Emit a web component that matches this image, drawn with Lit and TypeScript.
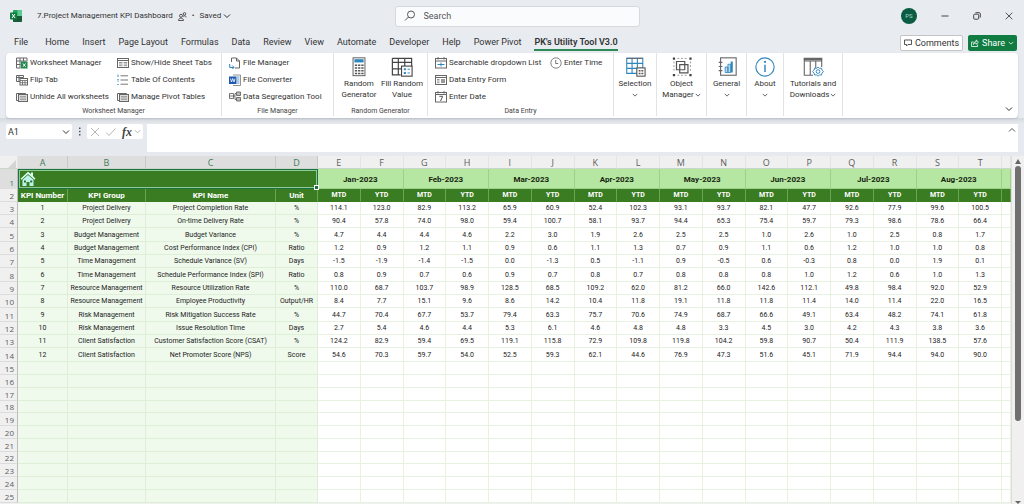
import { LitElement, html, svg, css, nothing } from "lit";
import { customElement } from "lit/decorators.js";
import { classMap } from "lit/directives/class-map.js";

const TABS = ["File", "Home", "Insert", "Page Layout", "Formulas", "Data", "Review", "View", "Automate", "Developer", "Help", "Power Pivot", "PK's Utility Tool V3.0"];
const MONTHS = ["Jan", "Feb", "Mar", "Apr", "May", "Jun", "Jul", "Aug"];
const LETTERS = "ABCDEFGHIJKLMNOPQRST".split("");
const EMPTY_ROWS = Array.from({ length: 11 }, (_, i) => 15 + i);

const KPIS: [string, string, string, string][] = [
  ["Project Delivery", "Project Completion Rate", "%", "114.1 123.0 82.9 113.2 65.9 60.9 52.4 102.3 93.1 93.7 82.1 47.7 92.6 77.9 99.6 100.5"],
  ["Project Delivery", "On-time Delivery Rate", "%", "90.4 57.8 74.0 98.0 59.4 100.7 58.1 93.7 94.4 65.3 75.4 59.7 79.3 98.6 78.6 66.4"],
  ["Budget Management", "Budget Variance", "%", "4.7 4.4 4.4 4.6 2.2 3.0 1.9 2.6 2.5 2.5 1.0 2.6 1.0 2.5 0.8 1.7"],
  ["Budget Management", "Cost Performance Index (CPI)", "Ratio", "1.2 0.9 1.2 1.1 0.9 0.6 1.1 1.3 0.7 0.9 1.1 0.6 1.2 1.0 1.0 0.8"],
  ["Time Management", "Schedule Variance (SV)", "Days", "-1.5 -1.9 -1.4 -1.5 0.0 -1.3 0.5 -1.1 0.9 -0.5 0.6 -0.3 0.8 0.0 1.9 0.1"],
  ["Time Management", "Schedule Performance Index (SPI)", "Ratio", "0.8 0.9 0.7 0.6 0.9 0.7 0.8 0.7 0.8 0.8 0.8 1.0 1.2 0.6 1.0 1.3"],
  ["Resource Management", "Resource Utilization Rate", "%", "110.0 68.7 103.7 98.9 128.5 68.5 109.2 62.0 81.2 66.0 142.6 112.1 49.8 98.4 92.0 52.9"],
  ["Resource Management", "Employee Productivity", "Output/HR", "8.4 7.7 15.1 9.6 8.6 14.2 10.4 11.8 19.1 11.8 11.8 11.4 14.0 11.4 22.0 16.5"],
  ["Risk Management", "Risk Mitigation Success Rate", "%", "44.7 70.4 67.7 53.7 79.4 63.3 75.7 70.6 74.9 68.7 66.6 49.1 63.4 48.2 74.1 61.8"],
  ["Risk Management", "Issue Resolution Time", "Days", "2.7 5.4 4.6 4.4 5.3 6.1 4.6 4.8 4.8 3.3 4.5 3.0 4.2 4.3 3.8 3.6"],
  ["Client Satisfaction", "Customer Satisfaction Score (CSAT)", "%", "124.2 82.9 59.4 69.5 119.1 115.8 72.9 109.8 119.8 104.2 59.8 90.7 50.4 111.9 138.5 57.6"],
  ["Client Satisfaction", "Net Promoter Score (NPS)", "Score", "54.6 70.3 59.7 54.0 52.5 59.3 62.1 44.6 76.9 47.3 51.6 45.1 71.9 94.4 94.0 90.0"],
];

const G = "#666";
const B = "#2f86bd";

/* Small icons use a 12 x 12 box, large ones 24 x 24. */
const SMALL: Record<string, unknown> = {
  sheet: svg`<path d="M.5 1h10.500v3M.5 1v10h4M.5 4h10M4 1v10M7.500 1v3M.5 7.500h4" fill="none" stroke=${G}/><rect x="5" y="4.500" width="6.500" height="7" fill="#1e8a4c"/><path d="m7 6.500 2.500 3.200m0-3.200L7 9.700" stroke="#fff" fill="none"/>`,
  flip: svg`<path d="M6 7.500H.5v-6h7v2M.5 3.500h7M3 1.500v6" fill="none" stroke=${G}/><rect x="4" y="4.500" width="7.500" height="6.500" fill="#fff" stroke=${G}/><path d="M4 6.500h7.500M4 8.700h7.500M6.500 6.500V11M9 6.500V11" stroke=${G} fill="none" stroke-width=".8"/>`,
  stack: svg`<path d="M2 9.500H.5v-7h9V3" fill="none" stroke=${G}/><rect x="2.500" y="3.500" width="9" height="7" fill="#ddd" stroke=${G}/><path d="M4 5.500h6M4 7h6M4 8.500h6" stroke="#888" stroke-width=".7"/>`,
  tabs: svg`<rect x=".5" y="1.500" width="11" height="9" fill="#fff" stroke=${G}/><path d="M.5 3.500h11" stroke=${G}/><path d="M2 5.500h3.500M2 7h3.500M2 8.700h3.500M6.700 5.500h3.500M6.700 7h3.500M6.700 8.700h3.500" stroke="#777" stroke-width=".8"/>`,
  contents: svg`<path d="M1 .5v2.500M.3 5.500h1.400M.3 7h1.400M.3 10.500h1.400" stroke=${B} fill="none" stroke-width=".9"/><path d="M3.500 1.800h7.500M3.500 6h7.500M3.500 10.200h7.500" stroke="#777"/>`,
  file: svg`<path d="M2.500 5V1h5l3 3v7H6M7.500 1v3h3" fill="none" stroke=${G}/><path d="M.7 7v3.500h4M3.200 8.500l2 2-2 1.500" fill="none" stroke=${B}/>`,
  word: svg`<path d="M4 1h7.500v10.500H4" fill="#fff" stroke="#777" stroke-width=".8"/><path d="M8 3h2.500M8 5h2.500M8 7h2.500M8 9h2.500" stroke=${B} stroke-width=".8"/><rect y="2.500" width="7.500" height="7.500" fill="#2159b0"/><path d="m1.500 4.500 1 3.500 1.200-3.500L5 8l1-3.500" stroke="#fff" fill="none" stroke-width=".8"/>`,
  segregate: svg`<path d="M.5 2.500h4v5h-4zM.5 5h4M4.500 5h1.500M6 2.500v6M6 2.500h1.500M6 8.500h1.500" fill="none" stroke=${G} stroke-width=".9"/><path d="M7.500 1h4v3.500h-4zM7.500 6.500h4V10h-4z" fill="#bbb" stroke=${G} stroke-width=".9"/>`,
  dropdown: svg`<rect x=".5" y="1.500" width="11" height="9.500" fill="#fff" stroke=${G}/><path d="M.5 4h11M3 0v2.500M9 0v2.500" stroke=${G}/><path d="M2.500 7.500h7M6 5.500v4" stroke=${B}/>`,
  form: svg`<rect x=".5" y="1.500" width="11" height="9" fill="#fff" stroke=${G}/><path d="M.5 3.500h11" stroke=${G}/><path d="M2 5.500h2.500M2 7h2.500M2 8.700h2.500" stroke="#777" stroke-width=".8"/><rect x="6" y="5" width="4" height="4" fill="#999"/>`,
  date: svg`<rect x=".5" y="1.500" width="11" height="9.500" fill="#fff" stroke=${G}/><path d="M.5 3.500h11M3 0v2.500M9 0v2.500" stroke=${G}/><path d="M4.300 5.300h3.400L5.500 10" stroke="#555" fill="none"/>`,
  clock: svg`<circle cx="6" cy="6" r="5.200" fill="#fff" stroke=${G} stroke-width=".8"/><path d="M5.700 3v3.500h2.500" stroke=${G} fill="none" stroke-width=".9"/>`,
};

const LARGE: Record<string, unknown> = {
  calculator: svg`<rect x="5.500" y="2" width="13" height="19.500" fill="#fff" stroke="#555"/><rect x="7" y="3.500" width="10" height="3.500" fill=${B}/><path d="M7.500 10H10M11 10h2.500M14.500 10H17M7.500 13H10M11 13h2.500M14.500 13H17M7.500 16H10M11 16h2.500M14.500 16H17M7.500 19H10M11 19h2.500M14.500 19H17" stroke="#555" stroke-width="1.600"/>`,
  fill: svg`<path d="M1.500 2.500h21v9M1.500 2.500v18h9M1.500 7h21M8 2.500v18M15 2.500V11M1.500 14h10" fill="none" stroke="#444" stroke-width="1.300"/><rect x="11.500" y="11" width="11.500" height="11" fill="#fff" stroke="#444" stroke-width="1.200"/><path d="M14 14.500h2.200M14 18.500h2.200" stroke=${B} stroke-width="2.200"/><path d="M18 14.500h2.700M18 18.500h2.700" stroke=${B}/>`,
  selection: svg`<path d="M3 2.500h17.500V19H3zM3 8h17.500M3 13.500h17.500M8.800 2.500V19M14.600 2.500V19" fill="none" stroke=${B} stroke-width="1.200"/><path d="M3 2.500h17.500" stroke="#666" stroke-width="1.200"/><rect x="14" y="13" width="9" height="9" fill="#fff" stroke="#555" stroke-width="1.200"/><path d="M16 16h2M19 16h2M16 19h2M19 19h2" stroke="#555" stroke-width="1.600"/>`,
  object: svg`<path d="M6 6h9v9H6zM9.500 9.500h9v9h-9z" fill="none" stroke="#555" stroke-width="1.300"/><path d="M7 2.700h10M3.200 6v12M21.300 6v12M7 21h10" stroke="#888" stroke-dasharray="2 2" stroke-width=".9" fill="none"/><path d="M2 1.500h2.500V4H2zM20 1.500h2.500V4H20zM2 19.700h2.500v2.500H2zM20 19.700h2.500v2.500H20z" fill="#444"/>`,
  general: svg`<rect x="5" y="2" width="17" height="19" fill="#fff" stroke="#666" stroke-width="1.200"/><path d="M3 7h4M3 11.500h4M3 16h4" stroke="#666" stroke-width="1.200"/><path d="M10 18v-6h3v6zM13 18V9h3v9z" fill="#bcd9ec" stroke=${B} stroke-width=".9"/><path d="M16 6h2.300v12H16z" fill=${B}/>`,
  about: svg`<circle cx="12" cy="12" r="10" fill="#fff" stroke=${B} stroke-width="1.200"/><path d="M12 9.500v8" stroke=${B} stroke-width="1.600"/><circle cx="12" cy="6.500" r="1.200" fill=${B}/>`,
  tutorials: svg`<path d="M12 21H2.500V2.500h19V12M2.500 5.500h19M9 5.500V21M15 5.500V13" fill="none" stroke="#666" stroke-width="1.200"/><path d="M2 3.500h20" stroke="#666" stroke-width="2.500"/><path d="m17.500 12 1.500 1.500 2.300-.3.500 2.200 1.700 1.600-1.700 1.600-.5 2.200-2.300-.3-1.500 1.500-1.500-1.500-2.300.3-.5-2.200-1.700-1.600 1.700-1.600.5-2.200 2.300.3z" fill="#fff" stroke=${B}/><circle cx="17.500" cy="17" r="2" fill="none" stroke=${B}/>`,
};

const chevron = (up = false) => html`<svg class="chev" viewBox="0 0 8 8" aria-hidden="true"><path d=${up ? "m1 5.500 3-3 3 3" : "m1 2.500 3 3 3-3"} fill="none" stroke="currentColor" /></svg>`;

@customElement("kpi-ribbon")
class KpiRibbon extends LitElement {
  static styles = css`
    :host {
      display: flex;
      position: relative;
      height: 65px;
      background: #fff;
      border-radius: 4px;
      box-shadow: 0 1px 2px #b9bfc8;
      font: 8px/12px Roboto, sans-serif;
      color: #333;
    }
    .group {
      box-sizing: border-box;
      display: flex;
      flex-direction: column;
      justify-content: space-between;
      padding-top: 4px;
      margin: 0 0 2px;
      border-right: 1px solid #e3e3e3;
    }
    .worksheet { width: 216px; }
    .files { width: 112px; }
    .random { width: 94px; }
    .entry { width: 186px; }
    .selection { width: 43px; }
    .objects { width: 50px; }
    .general { width: 40px; }
    .about { width: 37px; }
    .tutorials { width: 59px; }
    .items { display: flex; padding-left: 10px; }
    .files .items, .entry .items { padding-left: 7px; }
    .random .items, .menu .items { padding: 0; justify-content: center; }
    .stack { display: flex; flex-direction: column; align-items: flex-start; gap: 5px; }
    .worksheet .stack:first-child { width: 101px; }
    .entry .stack:first-child { width: 115px; }
    .label {
      font-size: 7px;
      line-height: 9px;
      text-align: center;
      color: #444;
    }
    button {
      display: flex;
      align-items: center;
      gap: 2px;
      padding: 0;
      border: 0;
      background: none;
      font: inherit;
      color: inherit;
      white-space: nowrap;
    }
    button.large {
      flex-direction: column;
      gap: 0;
      line-height: 11px;
      width: 43px;
      margin-top: -1px;
    }
    .small-icon { width: 12px; height: 12px; flex: none; }
    .large-icon { width: 22px; height: 22px; flex: none; }
    .line { display: flex; align-items: center; gap: 1px; height: 11px; }
    .chev { width: 6px; height: 6px; }
    .collapse {
      position: absolute;
      right: 5px;
      bottom: 5px;
    }
    .collapse .chev { width: 8px; height: 8px; }
  `;

  private small(icon: string, text: string) {
    return html`<button type="button"><svg class="small-icon" viewBox="0 0 12 12" aria-hidden="true">${SMALL[icon]}</svg><span>${text}</span></button>`;
  }

  private large(icon: string, first: string, second = "", menu = false) {
    return html`<button type="button" class="large">
      <svg class="large-icon" viewBox="0 0 24 24" aria-hidden="true">${LARGE[icon]}</svg>
      <span class="line">${first}</span>
      <span class="line">${second}${menu ? chevron() : nothing}</span>
    </button>`;
  }

  render() {
    return html`
      <div class="group worksheet">
        <div class="items">
          <div class="stack">${this.small("sheet", "Worksheet Manager")}${this.small("flip", "Flip Tab")}${this.small("stack", "Unhide All worksheets")}</div>
          <div class="stack">${this.small("tabs", "Show/Hide Sheet Tabs")}${this.small("contents", "Table Of Contents")}${this.small("stack", "Manage Pivot Tables")}</div>
        </div>
        <div class="label">Worksheet Manager</div>
      </div>
      <div class="group files">
        <div class="items">
          <div class="stack">${this.small("file", "File Manager")}${this.small("word", "File Converter")}${this.small("segregate", "Data Segregation Tool")}</div>
        </div>
        <div class="label">File Manager</div>
      </div>
      <div class="group random">
        <div class="items">${this.large("calculator", "Random", "Generator")}${this.large("fill", "Fill Random", "Value")}</div>
        <div class="label">Random Generator</div>
      </div>
      <div class="group entry">
        <div class="items">
          <div class="stack">${this.small("dropdown", "Searchable dropdown List")}${this.small("form", "Data Entry Form")}${this.small("date", "Enter Date")}</div>
          <div class="stack">${this.small("clock", "Enter Time")}</div>
        </div>
        <div class="label">Data Entry</div>
      </div>
      <div class="group menu selection"><div class="items">${this.large("selection", "Selection", "", true)}</div></div>
      <div class="group menu objects"><div class="items">${this.large("object", "Object", "Manager", true)}</div></div>
      <div class="group menu general"><div class="items">${this.large("general", "General", "", true)}</div></div>
      <div class="group menu about"><div class="items">${this.large("about", "About", "", true)}</div></div>
      <div class="group menu tutorials"><div class="items">${this.large("tutorials", "Tutorials and", "Downloads", true)}</div></div>
      <button type="button" class="collapse" aria-label="Collapse ribbon">${chevron()}</button>
    `;
  }
}

@customElement("kpi-sheet")
class KpiSheet extends LitElement {
  static styles = css`
    :host {
      display: flex;
      min-height: 0;
      overflow: hidden;
      background: #f0f0f0;
    }
    table {
      width: 100%;
      table-layout: fixed;
      border-spacing: 0;
      background: #fff;
      font: 7px/12px Roboto, sans-serif;
      color: #222;
    }
    .viewport { flex: 1; min-width: 0; overflow: hidden; }
    .c-row { width: 18px; }
    .c-a { width: 50px; }
    .c-b { width: 78px; }
    .c-c { width: 130px; }
    .c-d { width: 42px; }
    .c-last { width: 9px; }
    th, td {
      box-sizing: border-box;
      height: 13px;
      padding: 1px 0 0;
      line-height: 11px;
      text-align: center;
      vertical-align: middle;
      font-weight: 400;
      white-space: nowrap;
      overflow: hidden;
      border-right: 1px solid #e7f2e0;
      border-bottom: 1px solid #e7f2e0;
    }
    thead th, .num {
      font: 8px/11px "Open Sans", sans-serif;
      color: #5c5c5c;
      background: #f0f0f0;
      border-color: #dcdcdc;
    }
    thead th { font-size: 9px; border-bottom-color: #c9d6c9; border-right-color: #e4e4e4; }
    thead th.sel { background: #dedede; color: #3d7d5c; border-right-color: #c8c8c8; }
    thead .corner { text-align: right; vertical-align: bottom; }
    .corner svg { display: block; width: 8px; height: 8px; margin-left: 8px; }
    .num { text-align: right; padding-right: 3px; border-right-color: #bcbcbc; }
    .key { background: #effaed; border-color: #deefd8; }
    .data:nth-child(3n + 2) > * { height: 14px; }
    .blank > * { line-height: 10px; }
    .blank:nth-last-child(4n) > * { height: 12px; }
    .title > * { height: 20px; }
    .title .num { background: #dedede; color: #3d7d5c; vertical-align: bottom; }
    .title .banner {
      position: relative;
      padding: 0;
      background: #3a7c22;
      border: 1px solid #1e7145;
      box-shadow: inset 0 0 0 1px #8fc995;
      text-align: left;
      overflow: visible;
    }
    .handle {
      position: absolute;
      right: -2px;
      bottom: -2px;
      width: 3px;
      height: 3px;
      background: #1e7145;
      border: 1px solid #fff;
    }
    .home { display: block; padding: 0 0 0 1px; border: 0; background: none; }
    .home svg { display: block; width: 16px; height: 16px; }
    .month {
      background: #b5e6a2;
      font-size: 8px;
      font-weight: 700;
      color: #16250f;
      border-color: #9fd08b;
    }
    .names th:not(.num) {
      background: #3a7c22;
      color: #fff;
      font-size: 8px;
      font-weight: 700;
      border-right-color: #69a552;
      border-bottom-color: #3a7c22;
    }
    .names th.half { font-size: 7px; }
    .bar {
      width: 13px;
      flex: none;
      display: flex;
      flex-direction: column;
      align-items: center;
      padding-top: 3px;
      gap: 2px;
      box-sizing: border-box;
      border-left: 1px solid #ddd;
    }
    .bar svg { width: 6px; height: 5px; flex: none; }
    .thumb { flex: 256; width: 6px; border-radius: 3px; background: #707070; }
    .rest { flex: 74; }
  `;

  render() {
    return html`
      <div class="viewport">
        <table>
          <colgroup>
            <col class="c-row" /><col class="c-a" /><col class="c-b" /><col class="c-c" /><col class="c-d" />
            ${MONTHS.map(() => html`<col /><col />`)}
            <col class="c-last" />
          </colgroup>
          <thead>
            <tr>
              <th class="corner"><svg viewBox="0 0 8 8" aria-hidden="true"><path d="M8 0v8H0z" fill="#d4d4d4" /></svg></th>
              ${LETTERS.map((l, i) => html`<th scope="col" class=${classMap({ sel: i < 4 })}>${l}</th>`)}
              <th></th>
            </tr>
          </thead>
          <tbody>
            <tr class="title">
              <th class="num" scope="row">1</th>
              <td class="banner" colspan="4">
                <button type="button" class="home" aria-label="Home">
                  <svg viewBox="0 0 16 16"><path d="M11 3V1.500h2V5l2.500 2.700-1 1L8 3 1.500 8.700l-1-1L8 .8z" fill="#d9fbf3" /><path d="M2.500 8.800 8 4l5.500 4.800V15H9.500v-4h-3v4h-4z" fill="#b9f3ea" /><path d="M4 9.500h2v2H4zM10.200 9.500h2v2h-2z" fill="#2d6b34" /></svg>
                </button>
                <span class="handle"></span>
              </td>
              ${MONTHS.map((m) => html`<th class="month" colspan="2" scope="colgroup">${m}-2023</th>`)}
              <th class="month"></th>
            </tr>
            <tr class="names">
              <th class="num" scope="row">2</th>
              <th>KPI Number</th><th>KPI Group</th><th>KPI Name</th><th>Unit</th>
              ${MONTHS.map(() => html`<th class="half">MTD</th><th class="half">YTD</th>`)}
              <th></th>
            </tr>
            ${KPIS.map(([group, name, unit, values], i) => html`<tr class="data">
              <th class="num" scope="row">${i + 3}</th>
              <td class="key">${i + 1}</td><td class="key">${group}</td><td class="key">${name}</td><td class="key">${unit}</td>
              ${values.split(" ").map((v) => html`<td>${v}</td>`)}
              <td></td>
            </tr>`)}
            ${EMPTY_ROWS.map((n) => html`<tr class="blank">
              <th class="num" scope="row">${n}</th>
              <td class="key"></td><td class="key"></td><td class="key"></td><td class="key"></td>
              ${MONTHS.map(() => html`<td></td><td></td>`)}
              <td></td>
            </tr>`)}
          </tbody>
        </table>
      </div>
      <div class="bar">
        <svg viewBox="0 0 6 5" aria-hidden="true"><path d="m3 0 3 5H0z" fill="#666" /></svg>
        <div class="thumb"></div>
        <div class="rest"></div>
        <svg viewBox="0 0 6 5" aria-hidden="true"><path d="M0 2h6L3 5z" fill="#666" /></svg>
      </div>
    `;
  }
}

@customElement("app-root")
class AppRoot extends LitElement {
  static styles = css`
    :host {
      display: flex;
      flex-direction: column;
      height: 100vh;
      overflow: hidden;
      background: #e8ebf0;
      font: 8px/12px Roboto, sans-serif;
      color: #333;
    }
    button, input { font: inherit; color: inherit; }
    button { display: flex; align-items: center; padding: 0; border: 0; background: none; white-space: nowrap; }
    input { min-width: 0; padding: 0; border: 0; outline: 0; background: none; }
    .chev { width: 8px; height: 8px; }
    .titlebar {
      display: grid;
      grid-template-columns: 1fr 245px 1fr;
      align-items: center;
      height: 32px;
      padding: 0 0 0 10px;
    }
    .doc { display: flex; align-items: center; gap: 5px; }
    .logo { width: 12px; height: 12px; margin-right: 10px; }
    .people { width: 9px; height: 9px; }
    .saved { gap: 2px; }
    .search {
      display: flex;
      align-items: center;
      gap: 8px;
      height: 21px;
      padding: 0 8px;
      background: #fafbfc;
      border: 1px solid #d5d8dc;
      border-radius: 3px;
      box-sizing: border-box;
      font-size: 9px;
    }
    .search svg { width: 12px; height: 12px; }
    .search input { flex: 1; }
    .search input::placeholder { color: #555; }
    .window { display: flex; justify-content: flex-end; align-items: center; gap: 24px; padding-right: 11px; }
    .avatar {
      justify-content: center;
      width: 16px;
      height: 16px;
      border-radius: 50%;
      background: #0b5c43;
      color: #a9d6c5;
      font-size: 6px;
    }
    .window svg { width: 8px; height: 8px; }
    .tabs {
      display: flex;
      align-items: flex-end;
      height: 21px;
      padding: 0 7px 2px 14px;
      box-sizing: border-box;
      font-size: 9px;
    }
    .tabs nav { display: flex; gap: 13px; flex: 1; }
    .tabs a { color: inherit; text-decoration: none; white-space: nowrap; line-height: 14px; border-bottom: 2px solid transparent; }
    .tabs a:first-child { margin-right: 4px; }
    .tabs a.active { font-weight: 600; border-color: #2b8a57; }
    .comments, .share {
      height: 16px;
      gap: 3px;
      padding: 0 3px;
      border-radius: 2px;
      box-sizing: border-box;
    }
    .comments { background: #fff; border: 1px solid #c4c4c4; margin-right: 5px; }
    .share { background: #107c41; color: #fff; }
    .comments svg, .share svg { width: 8px; height: 8px; }
    .share .chev { width: 6px; height: 6px; }
    kpi-ribbon { margin: 0 6px; flex: none; }
    .formula {
      display: flex;
      align-items: flex-start;
      padding: 6px 6px 4px;
      background: linear-gradient(#d5d9de 0, #e6e9ee 6px);
      flex: none;
    }
    .namebox, .fx { display: flex; align-items: center; height: 15px; background: #fff; border-radius: 2px; box-sizing: border-box; padding: 0 2px; }
    .namebox { width: 66px; }
    .namebox input { flex: 1; font-size: 9px; }
    .dots { width: 15px; height: 15px; }
    .fx { width: 56px; gap: 6px; padding: 0 3px; color: #aaa; margin-right: 4px; }
    .fx svg { width: 10px; height: 10px; }
    .fx .chev { width: 7px; height: 7px; }
    .fx .insert { font: italic 700 12px/14px "Liberation Serif", serif; color: #444; }
    .fx button:last-child { margin-left: -4px; }
    .entry { flex: 1; display: flex; align-items: flex-start; height: 28px; background: #fff; padding: 2px 2px 0 4px; box-sizing: border-box; color: #555; }
    .entry input { flex: 1; }
    kpi-sheet { flex: 1; }
  `;

  render() {
    return html`
      <header class="titlebar">
        <div class="doc">
          <svg class="logo" viewBox="0 0 12 12" role="img" aria-label="Excel"><rect x="3" y="0" width="9" height="12" rx="1" fill="#21a366" /><path d="M7.500 0H11a1 1 0 0 1 1 1v5H7.500z" fill="#5cc98e" /><path d="M3 6h9v5a1 1 0 0 1-1 1H4a1 1 0 0 1-1-1z" fill="#185c37" /><rect y="2.500" width="7" height="7" rx=".8" fill="#107c41" /><path d="m2 4 3 4m0-4L2 8" stroke="#fff" /></svg>
          <span>7.Project Management KPI Dashboard</span>
          <svg class="people" viewBox="0 0 9 9" aria-hidden="true"><circle cx="3" cy="3.800" r="1.500" fill="none" stroke="#444" stroke-width=".9" /><path d="M.5 8.500c0-3.200 5-3.200 5 0zM5 4.500c1-1.200 3-.8 3.200.8" fill="none" stroke="#444" stroke-width=".9" /><circle cx="6.500" cy="1.900" r="1.300" fill="none" stroke="#444" stroke-width=".9" /></svg>
          <span>•</span>
          <button type="button" class="saved">Saved ${chevron()}</button>
        </div>
        <label class="search">
          <svg viewBox="0 0 12 12" aria-hidden="true"><circle cx="7" cy="4.500" r="3.500" fill="none" stroke="#555" /><path d="M4.500 7 1 10.500" stroke="#555" /></svg>
          <input type="search" placeholder="Search" aria-label="Search" />
        </label>
        <div class="window">
          <button type="button" class="avatar" aria-label="Account">PS</button>
          <button type="button" aria-label="Minimize"><svg viewBox="0 0 8 8"><path d="M.5 4h7" stroke="#444" /></svg></button>
          <button type="button" aria-label="Restore"><svg viewBox="0 0 8 8"><rect x=".7" y="2.200" width="5" height="5" rx="1" fill="none" stroke="#444" /><path d="M2.500.7h3.800a1 1 0 0 1 1 1v3.800" fill="none" stroke="#444" /></svg></button>
          <button type="button" aria-label="Close"><svg viewBox="0 0 8 8"><path d="m.7.7 6.600 6.600m0-6.600L.7 7.300" stroke="#444" stroke-width=".9" /></svg></button>
        </div>
      </header>
      <div class="tabs">
        <nav>${TABS.map((t, i) => html`<a href="#" class=${classMap({ active: i === TABS.length - 1 })}>${t}</a>`)}</nav>
        <button type="button" class="comments"><svg viewBox="0 0 8 8" aria-hidden="true"><path d="M.5 1h7v4.500H4L2.500 7V5.500h-2z" fill="none" stroke="#444" stroke-width=".9" /></svg>Comments</button>
        <button type="button" class="share"><svg viewBox="0 0 8 8" aria-hidden="true"><path d="M2.500 3H.6v4.500h6V5.500M2.500 5.500c0-2 1-2.800 2.700-2.800V1l2.300 2.200-2.300 2V4C4 4 3.200 4.300 2.500 5.500z" fill="none" stroke="#fff" stroke-width=".8" /></svg>Share ${chevron()}</button>
      </div>
      <kpi-ribbon></kpi-ribbon>
      <div class="formula">
        <div class="namebox"><input aria-label="Name box" value="A1" /><button type="button" aria-label="Names">${chevron()}</button></div>
        <svg class="dots" viewBox="0 0 15 15" aria-hidden="true"><path d="M7 3.500h1.500V5H7zM7 6.800h1.500v1.500H7zM7 10h1.500v1.500H7z" fill="#555" /></svg>
        <div class="fx">
          <button type="button" aria-label="Cancel"><svg viewBox="0 0 10 10"><path d="m1 1 8 8m0-8L1 9" stroke="#b5b5b5" /></svg></button>
          <button type="button" aria-label="Enter"><svg viewBox="0 0 10 10"><path d="m0 5.500 3 3 6.500-7" fill="none" stroke="#b5b5b5" /></svg></button>
          <button type="button" class="insert">fx</button>
          <button type="button" aria-label="Functions">${chevron()}</button>
        </div>
        <div class="entry"><input aria-label="Formula bar" /><button type="button" aria-label="Collapse formula bar">${chevron(true)}</button></div>
      </div>
      <kpi-sheet></kpi-sheet>
    `;
  }
}
